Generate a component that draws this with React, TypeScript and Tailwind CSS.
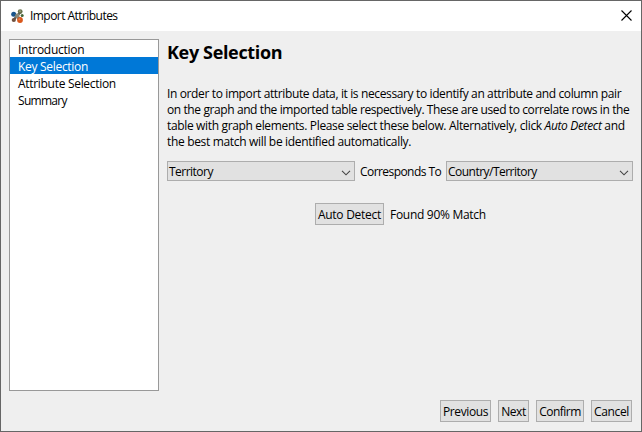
import React from 'react';

const steps = [
  { label: 'Introduction', tracking: 'tracking-[-0.25px]' },
  { label: 'Key Selection', tracking: 'tracking-[-0.3px]' },
  { label: 'Attribute Selection', tracking: 'tracking-[-0.3px]' },
  { label: 'Summary', tracking: 'tracking-[-0.7px]' },
];

function AppIcon() {
  return (
    <svg width="13" height="14" viewBox="0 0 13 14" className="block shrink-0">
      <path d="M2.5 5 6 7 9.5 3M6 7 2.5 11M6 7 9 11" stroke="#555" strokeWidth="2.4" fill="none" />
      <circle cx="2.7" cy="5.2" r="2.5" fill="#19558c" />
      <circle cx="9.2" cy="2.6" r="2.4" fill="#66704a" />
      <circle cx="6.3" cy="6.9" r="2.3" fill="#8b8a78" />
      <circle cx="2.8" cy="11" r="2.1" fill="#70513f" />
      <circle cx="9" cy="11" r="2.9" fill="#d9581c" />
      <circle cx="8.4" cy="10.3" r="1" fill="#ec8650" />
      <circle cx="11.2" cy="6.5" r="1.5" fill="#426638" />
      <circle cx="9" cy="2.2" r=".9" fill="#9a9f7c" />
    </svg>
  );
}

function Select({ value, width }: { value: string; width: string }) {
  return (
    <button className={`flex h-5 items-center justify-between border border-[#adadad] bg-[#e1e1e1] pr-[3px] pl-px ${width}`}>
      <span className="translate-y-px tracking-[-0.52px]">{value}</span>
      <svg width="10" height="6" viewBox="0 0 10 6" className="mt-[3px]">
        <path d="M1 .8 5 4.8 9 .8" fill="none" stroke="#444" strokeWidth="1.1" />
      </svg>
    </button>
  );
}

function Button({ label, width, tracking }: { label: string; width: string; tracking: string }) {
  return (
    <button className={`flex h-[22px] items-center justify-center border border-[#adadad] bg-[#e1e1e1] ${width}`}>
      <span className={`translate-y-px ${tracking}`}>{label}</span>
    </button>
  );
}

export default function App() {
  return (
    <div className="flex h-[432px] w-[642px] flex-col overflow-hidden border border-[#666] bg-[#efefef] font-['Open_Sans',sans-serif] text-[12px] leading-4 whitespace-nowrap text-black">
      <header className="flex h-[30px] shrink-0 items-center bg-white pr-[9px] pl-[10px]">
        <AppIcon />
        <span className="ml-[6px] tracking-[-0.55px]">Import Attributes</span>
        <svg width="11" height="11" viewBox="0 0 11 11" className="mb-px ml-auto">
          <path d="M.5.5 10.5 10.5M10.5.5.5 10.5" stroke="#000" strokeWidth="1.1" />
        </svg>
      </header>
      <div className="flex h-[360px] pt-2 pl-2">
        <nav className="h-[352px] w-[150px] shrink-0 border border-[#999] bg-white">
          {steps.map((s, i) => (
            <div key={s.label} className={`h-[17px] pl-2 leading-[19px] ${i === 1 ? 'bg-[#0078d7] text-white' : ''}`}>
              <span className={s.tracking}>{s.label}</span>
            </div>
          ))}
        </nav>
        <main className="ml-2 w-[466px] shrink-0">
          <h1 className="text-[18px] leading-[26px] font-bold tracking-[-0.35px]">Key Selection</h1>
          <div className="mt-[21px]">
            <div className="tracking-[-0.37px]">In order to import attribute data, it is necessary to identify an attribute and column pair</div>
            <div className="tracking-[-0.4px]">on the graph and the imported table respectively. These are used to correlate rows in the</div>
            <div className="tracking-[-0.345px]">table with graph elements. Please select these below. Alternatively, click <i>Auto Detect</i> and</div>
            <div className="tracking-[-0.33px]">the best match will be identified automatically.</div>
          </div>
          <div className="mt-[11px] flex items-center">
            <Select value="Territory" width="w-[188px]" />
            <span className="ml-[5px] w-[86px] translate-y-px tracking-[-0.56px]">Corresponds To</span>
            <Select value="Country/Territory" width="w-[187px]" />
          </div>
          <div className="mt-[22px] ml-[148px] flex items-center gap-[6px]">
            <Button label="Auto Detect" width="w-[69px]" tracking="tracking-[-0.27px]" />
            <span className="translate-y-px tracking-[-0.29px]">Found 90% Match</span>
          </div>
        </main>
      </div>
      <footer className="mt-[9px] mr-[9px] flex justify-end gap-[7px]">
        <Button label="Previous" width="w-[51px]" tracking="tracking-[-0.4px]" />
        <Button label="Next" width="w-[31px]" tracking="tracking-[-0.4px]" />
        <Button label="Confirm" width="w-12" tracking="tracking-[-0.5px]" />
        <Button label="Cancel" width="w-[41px]" tracking="tracking-[-0.35px]" />
      </footer>
    </div>
  );
}
